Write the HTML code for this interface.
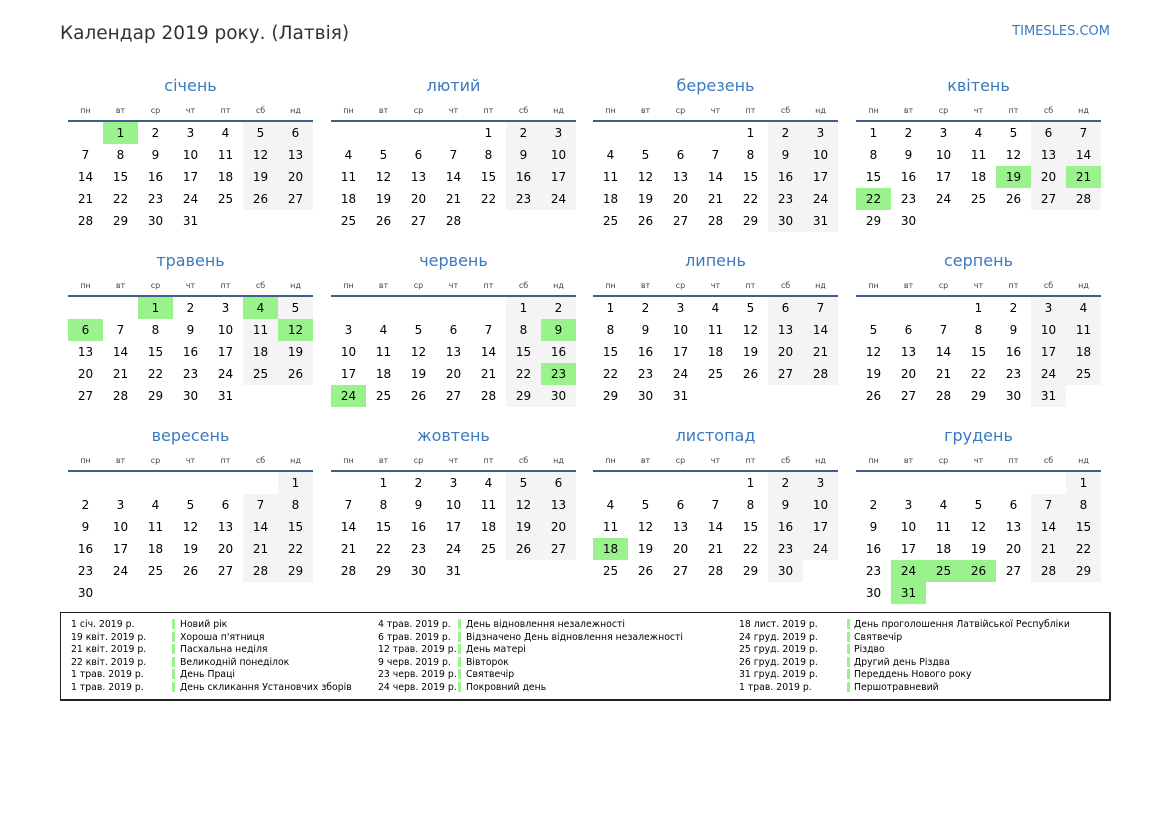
<!DOCTYPE html>
<html><head><meta charset="utf-8">
<style>
body{margin:0;width:1169px;height:827px;background:#fff;font-family:"DejaVu Sans","Liberation Sans",sans-serif;position:relative;overflow:hidden;color:#000}
.t{position:absolute;left:60px;top:23px;font-size:18.5px;color:#333}
.ts{position:absolute;right:59px;top:24px;font-size:13px;color:#3a7abf}
.m{position:absolute;width:245px}
.m h2{margin:0;height:28px;font-weight:normal;font-size:16px;color:#3a7abf;text-align:center;line-height:28px}
.wd{display:flex;height:22px;border-bottom:2px solid #3d5f8e;box-sizing:border-box}
.wd span{width:35px;text-align:center;font-size:8px;color:#444;line-height:22px}
table{border-collapse:collapse;table-layout:fixed;width:245px}
td{width:35px;height:22px;padding:0;text-align:center;font-size:12px;line-height:22px}
td:nth-child(n+6):not(:empty){background:#f4f4f4}
td.h,td.h:not(:empty){background:#99f28b}
.lg{position:absolute;left:60px;top:612px;width:1048px;height:86px;border:1px solid #222;border-bottom-width:2px;border-right-width:2px;font-size:9.3px}
.c{position:absolute;top:6px;line-height:12.5px;white-space:nowrap}
.b{position:absolute;top:6px;width:3px}
.b i{display:block;height:10px;margin-bottom:2.5px;background:#99f28b}
</style></head><body>
<div class="t">Календар 2019 року. (Латвія)</div>
<div class="ts">TIMESLES.COM</div>

<div class="m" style="left:68px;top:72px"><h2>січень</h2><div class="wd"><span>пн</span><span>вт</span><span>ср</span><span>чт</span><span>пт</span><span>сб</span><span>нд</span></div><table>
<tr><td></td><td class="h">1</td><td>2</td><td>3</td><td>4</td><td>5</td><td>6</td></tr>
<tr><td>7</td><td>8</td><td>9</td><td>10</td><td>11</td><td>12</td><td>13</td></tr>
<tr><td>14</td><td>15</td><td>16</td><td>17</td><td>18</td><td>19</td><td>20</td></tr>
<tr><td>21</td><td>22</td><td>23</td><td>24</td><td>25</td><td>26</td><td>27</td></tr>
<tr><td>28</td><td>29</td><td>30</td><td>31</td><td></td><td></td><td></td></tr></table></div>

<div class="m" style="left:331px;top:72px"><h2>лютий</h2><div class="wd"><span>пн</span><span>вт</span><span>ср</span><span>чт</span><span>пт</span><span>сб</span><span>нд</span></div><table>
<tr><td></td><td></td><td></td><td></td><td>1</td><td>2</td><td>3</td></tr>
<tr><td>4</td><td>5</td><td>6</td><td>7</td><td>8</td><td>9</td><td>10</td></tr>
<tr><td>11</td><td>12</td><td>13</td><td>14</td><td>15</td><td>16</td><td>17</td></tr>
<tr><td>18</td><td>19</td><td>20</td><td>21</td><td>22</td><td>23</td><td>24</td></tr>
<tr><td>25</td><td>26</td><td>27</td><td>28</td><td></td><td></td><td></td></tr></table></div>

<div class="m" style="left:593px;top:72px"><h2>березень</h2><div class="wd"><span>пн</span><span>вт</span><span>ср</span><span>чт</span><span>пт</span><span>сб</span><span>нд</span></div><table>
<tr><td></td><td></td><td></td><td></td><td>1</td><td>2</td><td>3</td></tr>
<tr><td>4</td><td>5</td><td>6</td><td>7</td><td>8</td><td>9</td><td>10</td></tr>
<tr><td>11</td><td>12</td><td>13</td><td>14</td><td>15</td><td>16</td><td>17</td></tr>
<tr><td>18</td><td>19</td><td>20</td><td>21</td><td>22</td><td>23</td><td>24</td></tr>
<tr><td>25</td><td>26</td><td>27</td><td>28</td><td>29</td><td>30</td><td>31</td></tr></table></div>

<div class="m" style="left:856px;top:72px"><h2>квітень</h2><div class="wd"><span>пн</span><span>вт</span><span>ср</span><span>чт</span><span>пт</span><span>сб</span><span>нд</span></div><table>
<tr><td>1</td><td>2</td><td>3</td><td>4</td><td>5</td><td>6</td><td>7</td></tr>
<tr><td>8</td><td>9</td><td>10</td><td>11</td><td>12</td><td>13</td><td>14</td></tr>
<tr><td>15</td><td>16</td><td>17</td><td>18</td><td class="h">19</td><td>20</td><td class="h">21</td></tr>
<tr><td class="h">22</td><td>23</td><td>24</td><td>25</td><td>26</td><td>27</td><td>28</td></tr>
<tr><td>29</td><td>30</td><td></td><td></td><td></td><td></td><td></td></tr></table></div>

<div class="m" style="left:68px;top:247px"><h2>травень</h2><div class="wd"><span>пн</span><span>вт</span><span>ср</span><span>чт</span><span>пт</span><span>сб</span><span>нд</span></div><table>
<tr><td></td><td></td><td class="h">1</td><td>2</td><td>3</td><td class="h">4</td><td>5</td></tr>
<tr><td class="h">6</td><td>7</td><td>8</td><td>9</td><td>10</td><td>11</td><td class="h">12</td></tr>
<tr><td>13</td><td>14</td><td>15</td><td>16</td><td>17</td><td>18</td><td>19</td></tr>
<tr><td>20</td><td>21</td><td>22</td><td>23</td><td>24</td><td>25</td><td>26</td></tr>
<tr><td>27</td><td>28</td><td>29</td><td>30</td><td>31</td><td></td><td></td></tr></table></div>

<div class="m" style="left:331px;top:247px"><h2>червень</h2><div class="wd"><span>пн</span><span>вт</span><span>ср</span><span>чт</span><span>пт</span><span>сб</span><span>нд</span></div><table>
<tr><td></td><td></td><td></td><td></td><td></td><td>1</td><td>2</td></tr>
<tr><td>3</td><td>4</td><td>5</td><td>6</td><td>7</td><td>8</td><td class="h">9</td></tr>
<tr><td>10</td><td>11</td><td>12</td><td>13</td><td>14</td><td>15</td><td>16</td></tr>
<tr><td>17</td><td>18</td><td>19</td><td>20</td><td>21</td><td>22</td><td class="h">23</td></tr>
<tr><td class="h">24</td><td>25</td><td>26</td><td>27</td><td>28</td><td>29</td><td>30</td></tr></table></div>

<div class="m" style="left:593px;top:247px"><h2>липень</h2><div class="wd"><span>пн</span><span>вт</span><span>ср</span><span>чт</span><span>пт</span><span>сб</span><span>нд</span></div><table>
<tr><td>1</td><td>2</td><td>3</td><td>4</td><td>5</td><td>6</td><td>7</td></tr>
<tr><td>8</td><td>9</td><td>10</td><td>11</td><td>12</td><td>13</td><td>14</td></tr>
<tr><td>15</td><td>16</td><td>17</td><td>18</td><td>19</td><td>20</td><td>21</td></tr>
<tr><td>22</td><td>23</td><td>24</td><td>25</td><td>26</td><td>27</td><td>28</td></tr>
<tr><td>29</td><td>30</td><td>31</td><td></td><td></td><td></td><td></td></tr></table></div>

<div class="m" style="left:856px;top:247px"><h2>серпень</h2><div class="wd"><span>пн</span><span>вт</span><span>ср</span><span>чт</span><span>пт</span><span>сб</span><span>нд</span></div><table>
<tr><td></td><td></td><td></td><td>1</td><td>2</td><td>3</td><td>4</td></tr>
<tr><td>5</td><td>6</td><td>7</td><td>8</td><td>9</td><td>10</td><td>11</td></tr>
<tr><td>12</td><td>13</td><td>14</td><td>15</td><td>16</td><td>17</td><td>18</td></tr>
<tr><td>19</td><td>20</td><td>21</td><td>22</td><td>23</td><td>24</td><td>25</td></tr>
<tr><td>26</td><td>27</td><td>28</td><td>29</td><td>30</td><td>31</td><td></td></tr></table></div>

<div class="m" style="left:68px;top:422px"><h2>вересень</h2><div class="wd"><span>пн</span><span>вт</span><span>ср</span><span>чт</span><span>пт</span><span>сб</span><span>нд</span></div><table>
<tr><td></td><td></td><td></td><td></td><td></td><td></td><td>1</td></tr>
<tr><td>2</td><td>3</td><td>4</td><td>5</td><td>6</td><td>7</td><td>8</td></tr>
<tr><td>9</td><td>10</td><td>11</td><td>12</td><td>13</td><td>14</td><td>15</td></tr>
<tr><td>16</td><td>17</td><td>18</td><td>19</td><td>20</td><td>21</td><td>22</td></tr>
<tr><td>23</td><td>24</td><td>25</td><td>26</td><td>27</td><td>28</td><td>29</td></tr>
<tr><td>30</td><td></td><td></td><td></td><td></td><td></td><td></td></tr></table></div>

<div class="m" style="left:331px;top:422px"><h2>жовтень</h2><div class="wd"><span>пн</span><span>вт</span><span>ср</span><span>чт</span><span>пт</span><span>сб</span><span>нд</span></div><table>
<tr><td></td><td>1</td><td>2</td><td>3</td><td>4</td><td>5</td><td>6</td></tr>
<tr><td>7</td><td>8</td><td>9</td><td>10</td><td>11</td><td>12</td><td>13</td></tr>
<tr><td>14</td><td>15</td><td>16</td><td>17</td><td>18</td><td>19</td><td>20</td></tr>
<tr><td>21</td><td>22</td><td>23</td><td>24</td><td>25</td><td>26</td><td>27</td></tr>
<tr><td>28</td><td>29</td><td>30</td><td>31</td><td></td><td></td><td></td></tr></table></div>

<div class="m" style="left:593px;top:422px"><h2>листопад</h2><div class="wd"><span>пн</span><span>вт</span><span>ср</span><span>чт</span><span>пт</span><span>сб</span><span>нд</span></div><table>
<tr><td></td><td></td><td></td><td></td><td>1</td><td>2</td><td>3</td></tr>
<tr><td>4</td><td>5</td><td>6</td><td>7</td><td>8</td><td>9</td><td>10</td></tr>
<tr><td>11</td><td>12</td><td>13</td><td>14</td><td>15</td><td>16</td><td>17</td></tr>
<tr><td class="h">18</td><td>19</td><td>20</td><td>21</td><td>22</td><td>23</td><td>24</td></tr>
<tr><td>25</td><td>26</td><td>27</td><td>28</td><td>29</td><td>30</td><td></td></tr></table></div>

<div class="m" style="left:856px;top:422px"><h2>грудень</h2><div class="wd"><span>пн</span><span>вт</span><span>ср</span><span>чт</span><span>пт</span><span>сб</span><span>нд</span></div><table>
<tr><td></td><td></td><td></td><td></td><td></td><td></td><td>1</td></tr>
<tr><td>2</td><td>3</td><td>4</td><td>5</td><td>6</td><td>7</td><td>8</td></tr>
<tr><td>9</td><td>10</td><td>11</td><td>12</td><td>13</td><td>14</td><td>15</td></tr>
<tr><td>16</td><td>17</td><td>18</td><td>19</td><td>20</td><td>21</td><td>22</td></tr>
<tr><td>23</td><td class="h">24</td><td class="h">25</td><td class="h">26</td><td>27</td><td>28</td><td>29</td></tr>
<tr><td>30</td><td class="h">31</td><td></td><td></td><td></td><td></td><td></td></tr></table></div>

<div class="lg">
<div class="c" style="left:10px">1 січ. 2019 р.<br>19 квіт. 2019 р.<br>21 квіт. 2019 р.<br>22 квіт. 2019 р.<br>1 трав. 2019 р.<br>1 трав. 2019 р.</div>
<div class="b" style="left:111px"><i></i><i></i><i></i><i></i><i></i><i></i></div>
<div class="c" style="left:119px">Новий рік<br>Хороша п'ятниця<br>Пасхальна неділя<br>Великодній понеділок<br>День Праці<br>День скликання Установчих зборів</div>
<div class="c" style="left:317px">4 трав. 2019 р.<br>6 трав. 2019 р.<br>12 трав. 2019 р.<br>9 черв. 2019 р.<br>23 черв. 2019 р.<br>24 черв. 2019 р.</div>
<div class="b" style="left:397px"><i></i><i></i><i></i><i></i><i></i><i></i></div>
<div class="c" style="left:405px">День відновлення незалежності<br>Відзначено День відновлення незалежності<br>День матері<br>Вівторок<br>Святвечір<br>Покровний день</div>
<div class="c" style="left:678px">18 лист. 2019 р.<br>24 груд. 2019 р.<br>25 груд. 2019 р.<br>26 груд. 2019 р.<br>31 груд. 2019 р.<br>1 трав. 2019 р.</div>
<div class="b" style="left:786px"><i></i><i></i><i></i><i></i><i></i><i></i></div>
<div class="c" style="left:793px">День проголошення Латвійської Республіки<br>Святвечір<br>Різдво<br>Другий день Різдва<br>Переддень Нового року<br>Першотравневий</div>
</div>
</body></html>
